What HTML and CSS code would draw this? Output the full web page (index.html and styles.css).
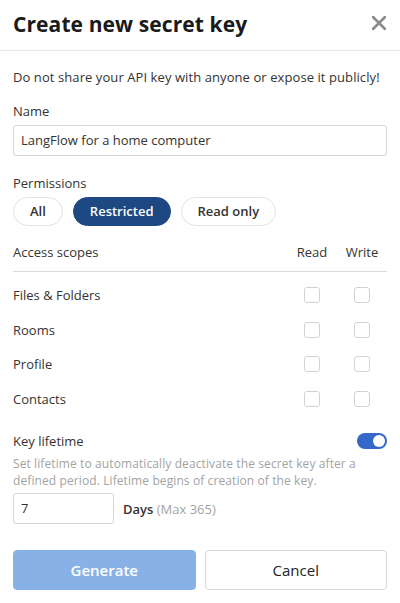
FILE: index.html
```html
<!DOCTYPE html>
<html>
<head>
<meta charset="utf-8">
<link rel="stylesheet" href="styles.css">
</head>
<body>
<div class="dialog">
  <header class="head">
    <h1 class="title">Create new secret key</h1>
    <svg class="close" width="14" height="14" viewBox="0 0 14 14"><path d="M1 1L13 13M13 1L1 13" stroke="#8a8a8a" stroke-width="2.6" stroke-linecap="round"/></svg>
  </header>
  <div class="body">
    <p class="warn">Do not share your API key with anyone or expose it publicly!</p>
    <div class="label name-label">Name</div>
    <div class="field">LangFlow for a home computer</div>
    <div class="label perm-label">Permissions</div>
    <div class="pills">
      <span class="pill">All</span>
      <span class="pill active">Restricted</span>
      <span class="pill">Read only</span>
    </div>
    <div class="scopes">
      <div class="row head-row"><span>Access scopes</span><span class="c">Read</span><span class="c">Write</span></div>
      <div class="list">
        <div class="row"><span>Files &amp; Folders</span><span class="c"><i class="cb"></i></span><span class="c"><i class="cb"></i></span></div>
        <div class="row"><span>Rooms</span><span class="c"><i class="cb"></i></span><span class="c"><i class="cb"></i></span></div>
        <div class="row"><span>Profile</span><span class="c"><i class="cb"></i></span><span class="c"><i class="cb"></i></span></div>
        <div class="row"><span>Contacts</span><span class="c"><i class="cb"></i></span><span class="c"><i class="cb"></i></span></div>
      </div>
    </div>
    <div class="life-head"><span class="label">Key lifetime</span><span class="toggle"><span class="knob"></span></span></div>
    <p class="desc">Set lifetime to automatically deactivate the secret key after a defined period. Lifetime begins of creation of the key.</p>
    <div class="days"><div class="field small">7</div><span class="days-label">Days <span class="muted">(Max 365)</span></span></div>
    <div class="actions">
      <button class="btn primary">Generate</button>
      <button class="btn">Cancel</button>
    </div>
  </div>
</div>
</body>
</html>
```
FILE: styles.css
```css
* { box-sizing: border-box; }
html, body { margin: 0; padding: 0; background: #fff; }
body { font-family: "Open Sans", "Noto Sans", sans-serif; color: #333; font-size: 13px; }
.dialog { width: 400px; }
.head { height: 51px; border-bottom: 1px solid #e8e8e8; display: flex; align-items: center; justify-content: space-between; padding: 0 14px 2px 13px; }
.title { margin: 0; font-size: 21px; font-weight: 700; color: #1a1a1a; letter-spacing: 0.1px; }
.close { display: block; margin-top: -2px; }
.body { padding: 0 13px; }
.warn { margin: 17px 0 0; line-height: 18px; color: #333; letter-spacing: 0.08px; }
.label { line-height: 18px; color: #333; }
.name-label { margin-top: 16px; }
.field { margin-top: 5px; height: 31px; border: 1px solid #d6d6d6; border-radius: 3px; padding: 0 7px; line-height: 29px; color: #333; }
.perm-label { margin-top: 18px; }
.pills { display: flex; gap: 10px; margin-top: 5px; }
.pill { height: 29px; line-height: 27px; padding: 0 16px; border: 1px solid #e2e2e2; border-radius: 15px; font-weight: 600; color: #333; }
.pill.active { background: #1d4882; border-color: #1d4882; color: #fff; }
.scopes { margin-top: 17px; }
.row { display: grid; grid-template-columns: 1fr 50px 50px; align-items: center; }
.head-row { line-height: 18px; padding-bottom: 10px; border-bottom: 1px solid #dcdcdc; }
.c { display: flex; justify-content: center; }
.list { padding-top: 6px; }
.list .row { height: 34.5px; }
.cb { display: block; width: 16px; height: 16px; border: 1px solid #d2d2d2; border-radius: 3px; }
.life-head { margin-top: 16px; display: flex; justify-content: space-between; align-items: center; }
.life-head .label { font-weight: 500; }
.toggle { width: 30px; height: 16px; border-radius: 8px; background: #3569c9; position: relative; }
.knob { position: absolute; right: 2px; top: 2px; width: 12px; height: 12px; border-radius: 50%; background: #fff; }
.desc { margin: 5px 0 0; font-size: 12px; line-height: 17px; color: #a3a3a3; letter-spacing: 0.1px; }
.days { display: flex; align-items: center; gap: 9px; margin-top: 4px; }
.field.small { width: 101px; margin-top: 0; }
.days-label { font-weight: 600; color: #333; }
.muted { font-weight: 400; color: #a3a3a3; }
.actions { display: flex; gap: 9px; margin-top: 26px; }
.btn { flex: 1; height: 40px; border-radius: 4px; border: 1px solid #d6d6d6; background: #fff; font-family: inherit; font-size: 15px; font-weight: 500; color: #222; }
.btn.primary { background: #87b1e7; border-color: #87b1e7; color: #fff; font-weight: 600; }
```
